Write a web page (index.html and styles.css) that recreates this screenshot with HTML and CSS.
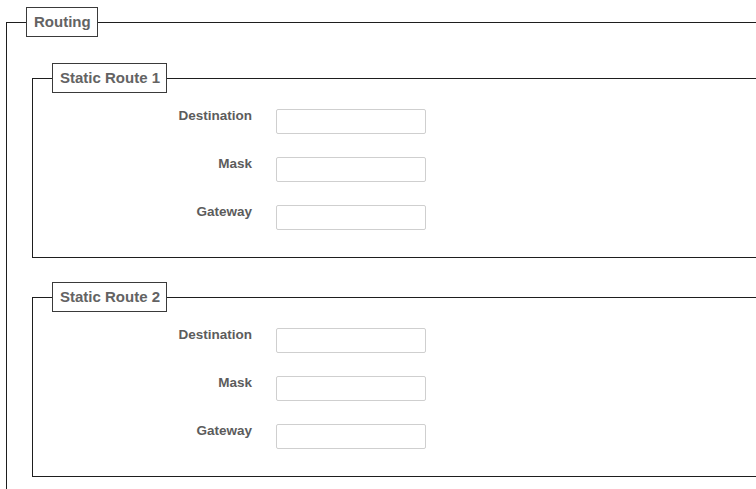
FILE: index.html
```html
<!DOCTYPE html>
<html>
<head>
<meta charset="utf-8">
<link rel="stylesheet" href="styles.css">
</head>
<body>
<div class="page">
<fieldset class="group outer">
  <legend class="caption">Routing</legend>
  <fieldset class="group route">
    <legend class="caption">Static Route 1</legend>
    <div class="form">
      <label class="lbl">Destination</label><input class="field" type="text">
      <label class="lbl">Mask</label><input class="field" type="text">
      <label class="lbl">Gateway</label><input class="field" type="text">
    </div>
  </fieldset>
  <fieldset class="group route">
    <legend class="caption">Static Route 2</legend>
    <div class="form">
      <label class="lbl">Destination</label><input class="field" type="text">
      <label class="lbl">Mask</label><input class="field" type="text">
      <label class="lbl">Gateway</label><input class="field" type="text">
    </div>
  </fieldset>
</fieldset>
</div>
</body>
</html>
```
FILE: styles.css
```css
html, body {
  margin: 0;
  padding: 0;
  background: #fff;
  overflow: hidden;
}
body {
  font-family: "Liberation Sans", Arial, sans-serif;
}
.page {
  width: 756px;
  height: 489px;
  overflow: hidden;
}
.group {
  border: 1px solid #1e1e1e;
  margin: 0;
  padding: 0;
  min-width: 0;
}
.outer {
  margin: 7px 0 0 6px;
  width: 900px;
  padding: 0 0 60px 19px;
}
.route {
  margin: 26px 0 0 6px;
  padding: 16px 0 27px 0;
}
.route + .route {
  margin-top: 24px;
}
.caption {
  border: 1px solid #3a3a3a;
  padding: 0 6px 0 7px;
  margin: 0 2px 0 0;
  line-height: 28px;
  font-size: 15px;
  font-weight: bold;
  color: #636363;
}
.route .caption {
  margin-left: 19px;
}
.form {
  display: grid;
  grid-template-columns: 219px 150px;
  column-gap: 24px;
  row-gap: 23px;
  align-items: start;
}
.lbl {
  text-align: right;
  font-size: 13.5px;
  font-weight: bold;
  color: #5c5c5c;
  line-height: 14px;
  padding-top: 0;
}
.field {
  box-sizing: border-box;
  width: 150px;
  height: 25px;
  margin: 0;
  border: 1px solid #cfcfcf;
  border-radius: 2px;
  background: #fff;
  padding: 0 4px;
}
```
